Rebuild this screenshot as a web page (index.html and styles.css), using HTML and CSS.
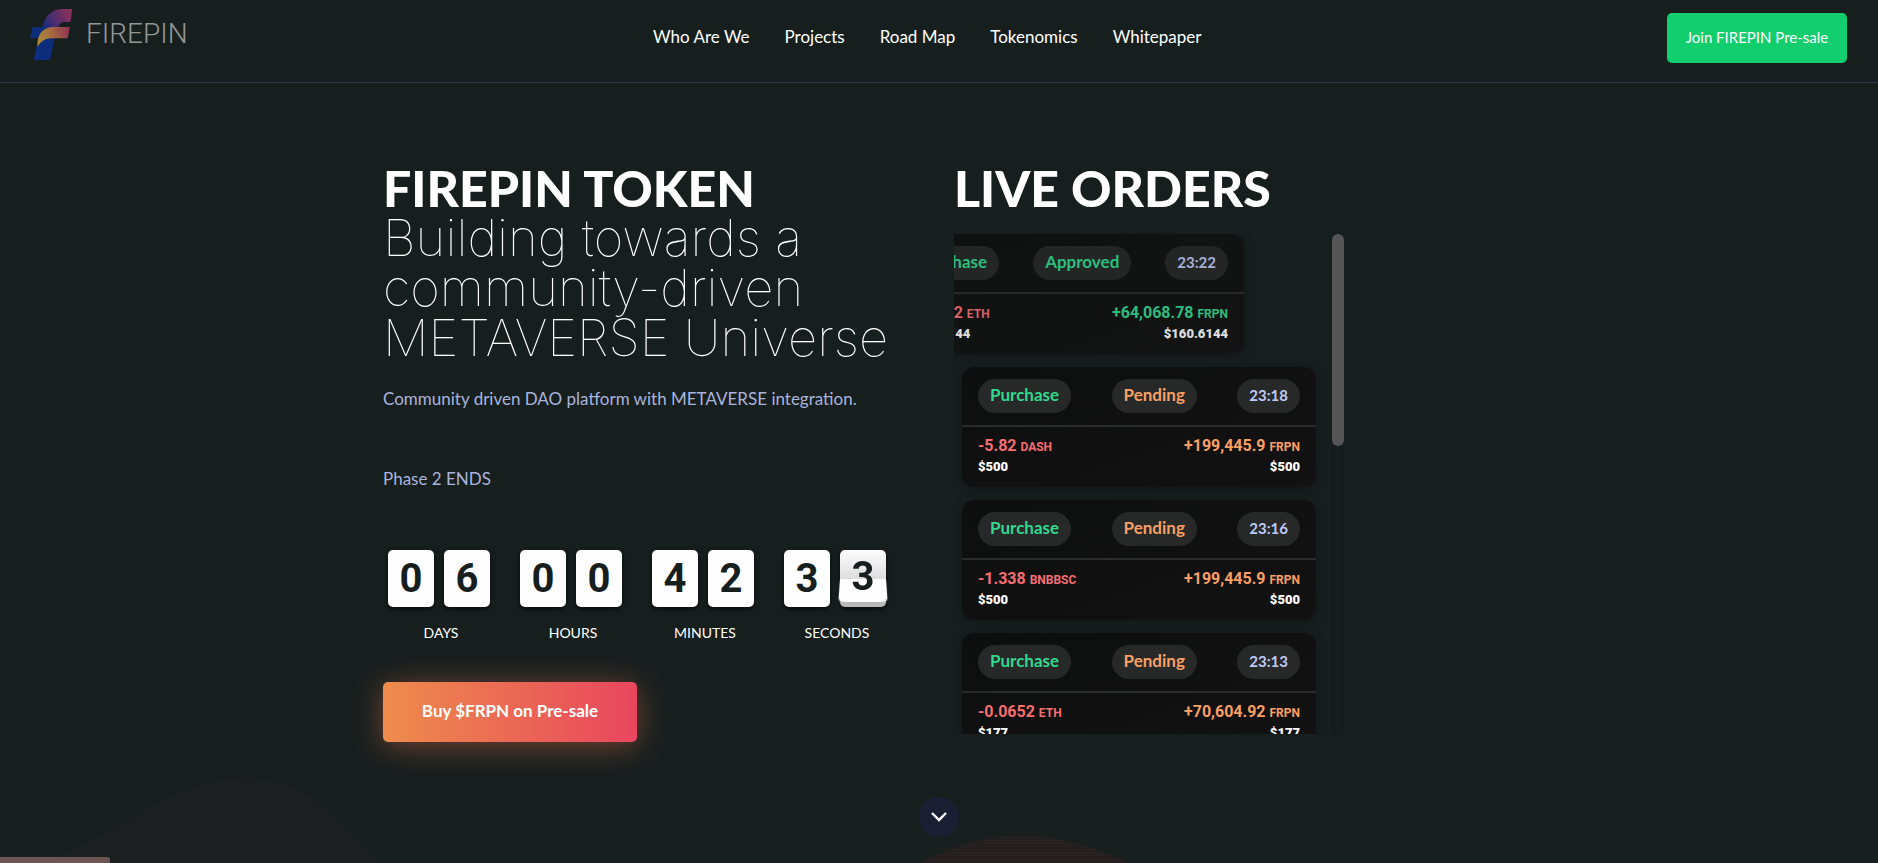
FILE: index.html
```html
<!DOCTYPE html>
<html lang="en">
  <head>
    <meta charset="UTF-8" />
    <meta name="viewport" content="width=device-width, initial-scale=1.0" />
    <title>FIREPIN Token</title>
    <link rel="stylesheet" href="styles.css">
  </head>
  <body>
    <header class="header">
      <a class="logo" href="#">
        <svg class="logo-mark" viewBox="90 27 126 153" aria-hidden="true">
          <defs>
            <linearGradient id="logo-top" gradientUnits="userSpaceOnUse" x1="130" y1="85" x2="205" y2="40">
              <stop offset="0" stop-color="#0c2c7c" />
              <stop offset="0.45" stop-color="#4b2d70" />
              <stop offset="1" stop-color="#86305c" />
            </linearGradient>
            <linearGradient id="logo-bar" gradientUnits="userSpaceOnUse" x1="112" y1="120" x2="210" y2="95">
              <stop offset="0" stop-color="#a88a36" />
              <stop offset="0.4" stop-color="#a8703f" />
              <stop offset="1" stop-color="#8f3153" />
            </linearGradient>
          </defs>
          <path fill="#0c2c7c" d="M98 81H175L163 118L150 180H101L115 115H90Z" />
          <path fill="url(#logo-top)" d="M216 27H190C155 27 133 50 127 82H176C177 72 182 66 192 66H211Q215 50 216 27Z" />
          <path fill="url(#logo-bar)" d="M210 81H160C128 81 109 105 113 142C121 122 138 115 160 115H203Z" />
        </svg>
        <span class="logo-text">FIREPIN</span>
      </a>
      <nav class="nav">
        <a href="#about">Who Are We</a>
        <a href="#projects">Projects</a>
        <a href="#roadmap">Road Map</a>
        <a href="#tokenomics">Tokenomics</a>
        <a href="#whitepaper">Whitepaper</a>
      </nav>
      <button class="join-btn">Join FIREPIN Pre-sale</button>
    </header>

    <main class="hero">
      <section class="intro">
        <h1 class="title">
          <strong>FIREPIN TOKEN</strong>
          <span class="thin">Building towards a<br />
          community-driven<br />
          METAVERSE Universe</span>
        </h1>
        <p class="lead">Community driven DAO platform with METAVERSE integration.</p>
        <p class="phase">Phase 2 ENDS</p>

        <div class="countdown">
          <div class="unit">
            <div class="digits"><span class="digit">0</span><span class="digit">6</span></div>
            <div class="unit-label">DAYS</div>
          </div>
          <div class="unit">
            <div class="digits"><span class="digit">0</span><span class="digit">0</span></div>
            <div class="unit-label">HOURS</div>
          </div>
          <div class="unit">
            <div class="digits"><span class="digit">4</span><span class="digit">2</span></div>
            <div class="unit-label">MINUTES</div>
          </div>
          <div class="unit">
            <div class="digits"><span class="digit">3</span><span class="digit flipping"><span class="flip-text">3</span></span></div>
            <div class="unit-label">SECONDS</div>
          </div>
        </div>

        <button class="buy-btn">Buy $FRPN on Pre-sale</button>
      </section>

      <section class="orders">
        <h2 class="title"><strong>LIVE ORDERS</strong></h2>
        <div class="orders-box">
          <div class="orders-list">
            <article class="order entering">
              <div class="order-head">
                <span class="pill green">Purchase</span>
                <span class="pill green">Approved</span>
                <span class="pill time">23:22</span>
              </div>
              <div class="order-body">
                <div class="amount red">-0.0592 <small>ETH</small><b>$160.6144</b></div>
                <div class="amount green right">+64,068.78 <small>FRPN</small><b>$160.6144</b></div>
              </div>
            </article>
            <article class="order">
              <div class="order-head">
                <span class="pill green">Purchase</span>
                <span class="pill orange">Pending</span>
                <span class="pill time">23:18</span>
              </div>
              <div class="order-body">
                <div class="amount red">-5.82 <small>DASH</small><b>$500</b></div>
                <div class="amount orange right">+199,445.9 <small>FRPN</small><b>$500</b></div>
              </div>
            </article>
            <article class="order">
              <div class="order-head">
                <span class="pill green">Purchase</span>
                <span class="pill orange">Pending</span>
                <span class="pill time">23:16</span>
              </div>
              <div class="order-body">
                <div class="amount red">-1.338 <small>BNBBSC</small><b>$500</b></div>
                <div class="amount orange right">+199,445.9 <small>FRPN</small><b>$500</b></div>
              </div>
            </article>
            <article class="order">
              <div class="order-head">
                <span class="pill green">Purchase</span>
                <span class="pill orange">Pending</span>
                <span class="pill time">23:13</span>
              </div>
              <div class="order-body">
                <div class="amount red">-0.0652 <small>ETH</small><b>$177</b></div>
                <div class="amount orange right">+70,604.92 <small>FRPN</small><b>$177</b></div>
              </div>
            </article>
          </div>
          <div class="scroll-track"><div class="scroll-thumb"></div></div>
        </div>
      </section>
    </main>

    <a class="scroll-down" href="#about" aria-label="Scroll down">
      <svg viewBox="0 0 16 10" aria-hidden="true"><path d="M1 1L8 8L15 1" /></svg>
    </a>

    <svg class="waves" viewBox="0 0 1878 86" preserveAspectRatio="none" aria-hidden="true">
      <defs>
        <pattern id="lines" width="8" height="3" patternUnits="userSpaceOnUse">
          <rect width="8" height="3" fill="#231f1f" />
          <rect width="8" height="1" fill="#2b2120" />
        </pattern>
      </defs>
      <path fill="#1c1f1f" d="M35 86C120 60 170 1 245 1C310 1 345 50 378 86Z" />
      <path fill="url(#lines)" d="M920 86C955 68 985 59 1022 59C1060 59 1090 68 1128 86Z" />
    </svg>
    <div class="progress"></div>
  </body>
</html>
```
FILE: styles.css
```css
* {
  box-sizing: border-box;
}

body {
  margin: 0;
  min-height: 100vh;
  position: relative;
  overflow: hidden;
  background: #171f1e;
  color: #fff;
  font-family: Lato, sans-serif;
  font-size: 17px;
}

button {
  border: none;
  color: #fff;
  font-family: inherit;
  cursor: pointer;
}

.header {
  display: flex;
  justify-content: space-between;
  align-items: flex-start;
  height: 83px;
  padding: 9px 31px 0 30px;
  border-bottom: 1px solid #2f3350;
}

.logo {
  display: flex;
  gap: 14px;
  color: #939796;
  text-decoration: none;
}

.logo-mark {
  width: 42px;
  height: 51px;
}

.logo-text {
  font-family: Roboto, sans-serif;
  font-weight: 300;
  font-size: 28px;
  line-height: 50px;
}

.nav {
  display: flex;
  gap: 35px;
}

.nav a {
  color: #fff;
  line-height: 56px;
  text-decoration: none;
}

.join-btn {
  width: 180px;
  height: 50px;
  margin-top: 4px;
  padding-bottom: 4px;
  border-radius: 5px;
  background: #13ce6e;
  font-size: 15px;
}

.hero {
  display: grid;
  grid-template-columns: 1fr 1fr;
  max-width: 1142px;
  margin: 0 auto;
  padding-top: 80px;
}

.intro,
.orders {
  padding: 0 15px;
}

.title {
  margin: 0;
  font-size: 50px;
  font-weight: 700;
  line-height: 50px;
  white-space: nowrap;
}

.title strong,
.thin {
  display: block;
}

.thin {
  font-family: Inter, sans-serif;
  font-size: 51px;
  font-weight: 100;
}

.lead,
.phase {
  margin: 21px 0 0;
  color: #a9b3dd;
  font-size: 17px;
  line-height: 30px;
}

.phase {
  margin-top: 50px;
}

.countdown {
  display: flex;
  gap: 30px;
  margin: 56px 0 0 5px;
}

.unit {
  width: 102px;
  text-align: center;
}

.digits {
  display: flex;
  gap: 10px;
}

.digit {
  width: 46px;
  height: 57px;
  border-radius: 5px;
  background: #fffefe;
  box-shadow: 0 2px 5px rgba(0, 0, 0, 0.7);
  color: #171f1e;
  font-family: Roboto, sans-serif;
  font-size: 40px;
  font-weight: 700;
  line-height: 57px;
}

.flipping {
  position: relative;
  background: linear-gradient(#fdfdfd, #dedede 50%, #b8b8b8);
}

/* lower half of the flap, tilted towards the viewer */
.flipping::before {
  content: "";
  position: absolute;
  top: 29px;
  left: 0;
  width: 46px;
  height: 23px;
  border-radius: 0 0 5px 5px;
  background: #fffefe;
  box-shadow: 0 1px 1px #aaa;
  transform: perspective(120px) rotateX(20deg);
  transform-origin: top;
}

.flip-text {
  position: relative;
  display: block;
  line-height: 54px;
}

.unit-label {
  margin-top: 16px;
  padding-left: 4px;
  font-size: 14px;
  line-height: 20px;
}

.buy-btn {
  width: 254px;
  height: 60px;
  margin-top: 39px;
  padding-bottom: 4px;
  border-radius: 5px;
  background: linear-gradient(90deg, #ee8c4c, #e9465e);
  box-shadow: 0 4px 30px rgba(238, 110, 76, 0.45);
  font-size: 17px;
  font-weight: 700;
}

.orders-box {
  display: flex;
  height: 500px;
  margin-top: 21px;
}

.orders-list {
  width: 378px;
  padding: 0 16px 0 8px;
  overflow: hidden;
}

.order {
  height: 120px;
  margin-bottom: 13px;
  border-radius: 12px;
  background: linear-gradient(160deg, #0d0e0e, #131212);
  box-shadow: 0 2px 8px rgba(0, 0, 0, 0.35);
}

.entering {
  opacity: 0.85;
  transform: translateX(-72px);
}

.order-head {
  display: flex;
  justify-content: space-between;
  align-items: center;
  height: 60px;
  padding: 0 16px;
  border-bottom: 2px solid #2a2b2b;
}

.pill {
  padding: 0 12px 2px;
  border-radius: 17px;
  background: #272828;
  font-size: 17px;
  font-weight: 700;
  line-height: 32px;
}

.green {
  color: #30d98e;
}

.orange {
  color: #f99f63;
}

.red {
  color: #f76d70;
}

.time {
  color: #bfcaf8;
  font-size: 15px;
}

.order-body {
  display: flex;
  justify-content: space-between;
  padding: 9px 16px;
  font-family: Roboto, sans-serif;
}

.amount {
  font-size: 16px;
  font-weight: 700;
  line-height: 20px;
}

.amount small {
  font-size: 12px;
}

.amount b {
  display: block;
  color: #fff;
  font-size: 13px;
}

.right {
  text-align: right;
}

.scroll-track {
  width: 12px;
  border-radius: 6px;
  box-shadow: inset 0 0 5px rgba(0, 0, 0, 0.3);
}

.scroll-thumb {
  height: 212px;
  border-radius: 6px;
  background: #555;
}

.scroll-down {
  display: flex;
  justify-content: center;
  align-items: center;
  width: 40px;
  height: 40px;
  margin: 55px auto 0;
  border-radius: 50%;
  background: #1b1f34;
  position: relative;
  z-index: 1;
}

.scroll-down svg {
  width: 16px;
  height: 10px;
  fill: none;
  stroke: #fff;
  stroke-width: 2.4;
}

.waves {
  position: absolute;
  bottom: 0;
  left: 0;
  width: 100%;
  height: 86px;
}

.progress {
  position: absolute;
  bottom: 0;
  left: 0;
  width: 110px;
  height: 6px;
  border-radius: 0 3px 0 0;
  background: #6b5652;
}
```
